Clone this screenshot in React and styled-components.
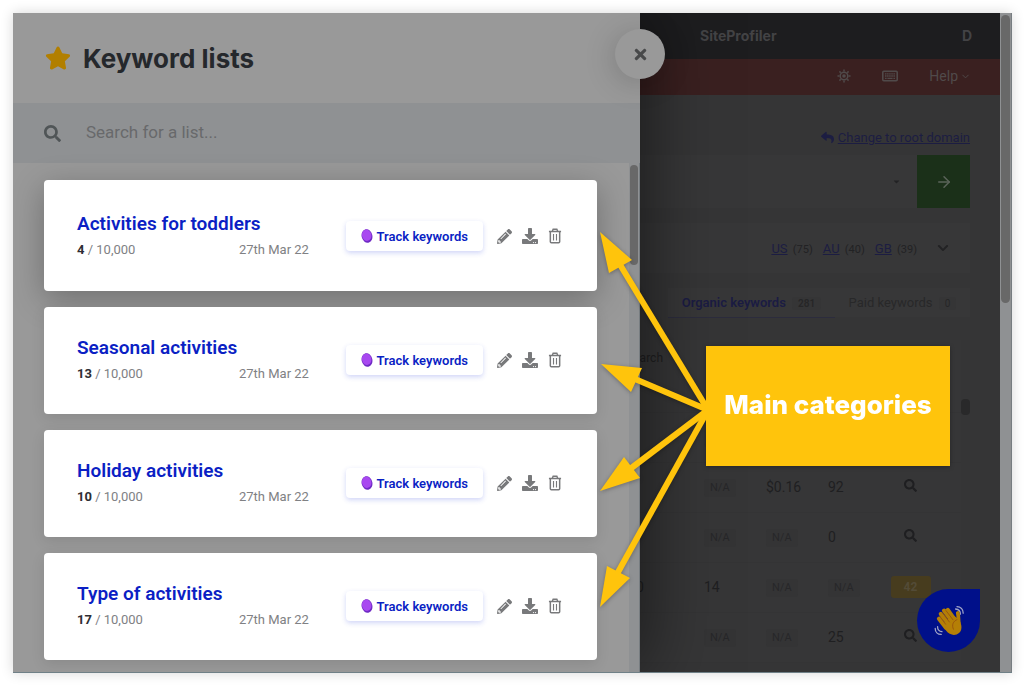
import React, { useState } from 'react';
import styled, { createGlobalStyle } from 'styled-components';
import { FaStar, FaSearch, FaTimes, FaPencilAlt, FaDownload, FaReply, FaCaretDown, FaChevronDown } from 'react-icons/fa';
import { FiArrowRight, FiChevronDown } from 'react-icons/fi';

const body = "Roboto, 'Liberation Sans', sans-serif";
const heading = "Inter, 'Liberation Sans', sans-serif";

const lists = [
  { id: 1, name: 'Activities for toddlers', count: 4, date: '27th Mar 22' },
  { id: 2, name: 'Seasonal activities', count: 13, date: '27th Mar 22' },
  { id: 3, name: 'Holiday activities', count: 10, date: '27th Mar 22' },
  { id: 4, name: 'Type of activities', count: 17, date: '27th Mar 22' },
];

const countries = [
  { code: 'US', count: 75 },
  { code: 'AU', count: 40 },
  { code: 'GB', count: 39 },
];

const keywordRows = [
  { id: 1, volume: '', clicks: null, cpc: null, ppc: '', kd: '' },
  { id: 2, volume: '', clicks: null, cpc: '$0.16', ppc: '92', kd: '' },
  { id: 3, volume: '', clicks: null, cpc: null, ppc: '0', kd: '' },
  { id: 4, volume: '10', clicks: '14', cpc: null, ppc: null, kd: '42' },
  { id: 5, volume: '', clicks: null, cpc: null, ppc: '25', kd: '' },
];

const arrows = [
  { line: [708, 410, 619, 263], head: '600,232 632,260 609,273' },
  { line: [708, 410, 635, 379], head: '601,364 642,368 631,392' },
  { line: [708, 410, 630, 469], head: '600,491 624,457 640,478' },
  { line: [708, 410, 617, 574], head: '600,607 607,566 630,578' },
];

const SunIcon = () => (
  <svg width="14" height="14" viewBox="0 0 14 14" fill="none" stroke="currentColor" aria-hidden="true">
    <circle cx="7" cy="7" r="3.8" strokeWidth="1.5" />
    <circle cx="7" cy="7" r="1.8" fill="currentColor" stroke="none" />
    <path
      d="M7 .5v2M7 11.5v2M.5 7h2M11.5 7h2M2.4 2.4l1.4 1.4M10.2 10.2l1.4 1.4M2.4 11.6l1.4-1.4M10.2 3.8l1.4-1.4"
      strokeWidth="1.5"
    />
  </svg>
);

const KeyboardIcon = () => (
  <svg width="16" height="12" viewBox="0 0 16 12" fill="none" stroke="currentColor" aria-hidden="true">
    <rect x=".8" y="1.2" width="14.4" height="9.6" rx="1" strokeWidth="1.6" />
    <path d="M3 3.8h10M3 6h10" strokeWidth="1.3" strokeDasharray="1.5 .6" />
    <path d="M3 8.3h1.6M5.4 8.3h5.2M11.4 8.3H13" strokeWidth="1.3" />
  </svg>
);

const TrashIcon = () => (
  <svg width="14" height="16" viewBox="0 0 15 17" fill="none" stroke="currentColor" aria-hidden="true">
    <path d="M1 3.6h13M4.6 3.4l.9-2.1h4l.9 2.1" strokeWidth="1.5" />
    <path d="M2.5 4v10.6c0 .7.4 1.1 1.1 1.1h7.8c.7 0 1.1-.4 1.1-1.1V4" strokeWidth="1.6" />
    <path d="M5.9 6.4v6.8M9.1 6.4v6.8" strokeWidth="1.2" />
  </svg>
);

const BlobIcon = () => (
  <svg width="12" height="14" viewBox="0 0 12 14" aria-hidden="true">
    <ellipse cx="6" cy="7" rx="5.4" ry="6.8" fill="#6f2bc4" transform="rotate(-12 6 7)" />
    <ellipse cx="5.6" cy="6.2" rx="4.7" ry="5.7" fill="#a848f0" transform="rotate(-12 6 6)" />
  </svg>
);

const WaveIcon = () => (
  <svg width="32" height="32" viewBox="0 0 32 32" fill="none" strokeLinecap="round" aria-hidden="true">
    <path
      d="M22.6 4c3 .2 4.8 2.2 4.8 5.2M24 1.6c3.6.2 6.2 2.8 6.2 6.6M4.6 21.6c-.2 2.8 1.4 4.8 4.4 5M2.2 23.4c0 3.6 2.4 6 6 6"
      stroke="#a2a6c8"
      strokeWidth="1.3"
    />
    <g stroke="#b57f06" strokeWidth="4.2">
      <path d="M6 13.6l7 9M7.8 9l8 10M11 5.6l8.4 11M14.8 5l7.6 10.6" />
      <path d="M24.8 8c.9 3.6.4 6 1 10" strokeWidth="3.8" />
    </g>
    <path d="M9 19l11.4-8.8 5.4 4.2c3.6 5.4 3.4 10.6.2 13.6-3.6 3.2-9.4 2.4-13-2.4z" fill="#b57f06" />
    <path
      d="M7.2 12l5.4 7.2M9.6 8l6.8 9M13 5.6l7 9.2M24 14.6c-3.8 1.6-5.6 5.2-3.6 9.6"
      stroke="#98520f"
      strokeWidth=".9"
    />
  </svg>
);

const ListCard = ({ item, first }) => (
  <Card $first={first}>
    <div>
      <ListName>{item.name}</ListName>
      <ListMeta>
        <span>
          <strong>{item.count}</strong> / 10,000
        </span>
        <time>{item.date}</time>
      </ListMeta>
    </div>
    <CardActions>
      <TrackButton type="button">
        <BlobIcon />
        Track keywords
      </TrackButton>
      <IconButton type="button" aria-label={`Edit ${item.name}`}>
        <FaPencilAlt size={15} />
      </IconButton>
      <IconButton type="button" aria-label={`Download ${item.name}`}>
        <FaDownload size={16} />
      </IconButton>
      <IconButton type="button" aria-label={`Delete ${item.name}`}>
        <TrashIcon />
      </IconButton>
    </CardActions>
  </Card>
);

const KeywordDrawer = () => {
  const [query, setQuery] = useState('');
  const visible = lists.filter(l => l.name.toLowerCase().includes(query.toLowerCase()));

  return (
    <Drawer>
      <DrawerHeader>
        <FaStar size={26} color="#b27f00" />
        <DrawerTitle>Keyword lists</DrawerTitle>
      </DrawerHeader>
      <CloseButton type="button" aria-label="Close">
        <FaTimes size={17} />
      </CloseButton>
      <SearchBar>
        <FaSearch size={17} />
        <SearchInput
          type="text"
          aria-label="Search for a list"
          placeholder="Search for a list..."
          value={query}
          onChange={e => setQuery(e.target.value)}
        />
      </SearchBar>
      <DrawerBody>
        <CardList>
          {visible.map((item, i) => (
            <ListCard key={item.id} item={item} first={i === 0} />
          ))}
        </CardList>
        <ScrollTrack>
          <ScrollThumb $height={100} />
        </ScrollTrack>
      </DrawerBody>
    </Drawer>
  );
};

const Value = ({ children }) => (children === null ? <Badge>N/A</Badge> : children);

const ExplorerPage = () => (
  <Page>
    <TopBar>
      <span>SiteProfiler</span>
      <span>D</span>
    </TopBar>
    <RedBar>
      <SunIcon />
      <KeyboardIcon />
      <HelpButton type="button">
        Help <FiChevronDown size={11} />
      </HelpButton>
    </RedBar>
    <Content>
      <RootLink>
        <FaReply size={13} />
        <a href="#root">Change to root domain</a>
      </RootLink>
      <UrlBar>
        <FaCaretDown size={9} />
        <GoButton type="button" aria-label="Explore">
          <FiArrowRight size={18} />
        </GoButton>
      </UrlBar>
      <Countries>
        {countries.map(c => (
          <span key={c.code}>
            <a href={`#${c.code}`}>{c.code}</a> <small>({c.count})</small>
          </span>
        ))}
        <FaChevronDown size={12} />
      </Countries>
      <Tabs>
        <Tab type="button" $active>
          Organic keywords <TabCount>281</TabCount>
        </Tab>
        <Tab type="button">
          Paid keywords <TabCount>0</TabCount>
        </Tab>
      </Tabs>
      <TableWrap>
        <Table>
          <thead>
            <tr>
              <th>Search</th>
              <th aria-label="Clicks" />
              <th aria-label="CPC" />
              <th aria-label="PPC" />
              <th aria-label="KD" />
            </tr>
          </thead>
          <tbody>
            {keywordRows.map(row => (
              <tr key={row.id}>
                <td>{row.volume}</td>
                <td>
                  <Value>{row.clicks}</Value>
                </td>
                <td>
                  <Value>{row.cpc}</Value>
                </td>
                <td>
                  <Value>{row.ppc}</Value>
                </td>
                <td>{row.kd ? <Score>{row.kd}</Score> : <FaSearch size={13} />}</td>
              </tr>
            ))}
          </tbody>
        </Table>
        <TableScroll />
      </TableWrap>
    </Content>
    <ChatButton type="button" aria-label="Say hello">
      <WaveIcon />
    </ChatButton>
  </Page>
);

const App = () => (
  <>
    <GlobalStyle />
    <Stage>
      <Frame>
        <KeywordDrawer />
        <ExplorerPage />
        <ScrollTrack>
          <ScrollThumb $height={288} />
        </ScrollTrack>
        <Annotation>
          <svg width="424" height="659" viewBox="588 13 424 659" aria-hidden="true">
            {arrows.map(({ line, head }) => (
              <g key={head} fill="#ffc40c" stroke="#ffc40c">
                <line x1={line[0]} y1={line[1]} x2={line[2]} y2={line[3]} strokeWidth="6" />
                <polygon points={head} stroke="none" />
              </g>
            ))}
          </svg>
          <Callout>Main categories</Callout>
        </Annotation>
      </Frame>
    </Stage>
  </>
);

export default App;

const GlobalStyle = createGlobalStyle`
  * {
    box-sizing: border-box;
  }
  body {
    margin: 0;
    background: #fff;
    font-family: ${body};
  }
  button {
    font: inherit;
    border: 0;
    padding: 0;
    background: none;
    color: inherit;
    cursor: pointer;
  }
`;

const Stage = styled.main`
  min-height: 100vh;
  padding: 13px 12px 13px 13px;
  display: flex;
`;

const Frame = styled.div`
  position: relative;
  flex: 1;
  display: grid;
  grid-template-columns: minmax(0, 1fr) 360px 12px;
  border-bottom: 1px solid #6f8087;
  box-shadow: 0 0 12px rgba(0, 0, 0, 0.16);
`;

const Drawer = styled.section`
  position: relative;
  z-index: 1;
  display: flex;
  flex-direction: column;
  background: #999;
  box-shadow: 4px 0 70px rgba(0, 0, 0, 0.55);
  clip-path: inset(0 -120px 0 0);
`;

const DrawerHeader = styled.header`
  display: flex;
  align-items: center;
  gap: 12px;
  height: 90px;
  padding-left: 32px;
`;

const DrawerTitle = styled.h1`
  margin: 0;
  font-family: ${heading};
  font-size: 26px;
  font-weight: 700;
  color: #25282c;
`;

const CloseButton = styled.button`
  position: absolute;
  top: 16px;
  right: -25px;
  display: flex;
  align-items: center;
  justify-content: center;
  width: 50px;
  height: 50px;
  border-radius: 50%;
  background: #999;
  color: #48494a;
  box-shadow: -2px 4px 30px rgba(0, 0, 0, 0.18);
`;

const SearchBar = styled.label`
  display: flex;
  align-items: center;
  gap: 25px;
  height: 60px;
  padding-left: 31px;
  background: #8f9193;
  color: #505557;
`;

const SearchInput = styled.input`
  flex: 1;
  border: 0;
  outline: 0;
  padding: 0 0 2px;
  background: none;
  font-family: ${body};
  font-size: 17px;
  color: #333;
  &::placeholder {
    color: #68696b;
    opacity: 1;
  }
`;

const DrawerBody = styled.div`
  flex: 1;
  display: grid;
  grid-template-columns: minmax(0, 1fr) 11px;
`;

const CardList = styled.div`
  display: flex;
  flex-direction: column;
  gap: 16px;
  padding: 17px 32px 12px 31px;
`;

const Card = styled.article`
  display: flex;
  justify-content: space-between;
  min-height: ${({ $first }) => ($first ? 111 : 107)}px;
  padding: ${({ $first }) => ($first ? 30 : 27)}px 35px 0 33px;
  border-radius: 4px;
  background: #fff;
  box-shadow: ${({ $first }) => ($first ? '0 8px 32px rgba(0, 0, 0, 0.28)' : '0 4px 14px rgba(0, 0, 0, 0.1)')};
`;

const ListName = styled.h2`
  margin: 0;
  font-size: 19px;
  line-height: 28px;
  font-weight: 600;
  color: #0b1fc4;
`;

const ListMeta = styled.p`
  display: grid;
  grid-template-columns: 162px auto;
  margin: 3px 0 0;
  font-size: 13px;
  line-height: 18px;
  color: #808184;
  strong {
    color: #2d2d33;
  }
`;

const CardActions = styled.div`
  display: flex;
  align-items: center;
  gap: 10px;
  height: 52px;
`;

const TrackButton = styled.button`
  display: flex;
  align-items: center;
  gap: 4px;
  height: 30px;
  margin-right: 4px;
  padding: 0 15px;
  border-radius: 4px;
  font-size: 13px;
  font-weight: 600;
  color: #0b1fc4;
  box-shadow: 0 2px 5px rgba(60, 80, 220, 0.24);
`;

const IconButton = styled.button`
  display: flex;
  color: #78797b;
`;

const ScrollTrack = styled.div`
  background: #8f9193;
  border-right: 1px solid #777d81;
`;

const ScrollThumb = styled.div`
  height: ${({ $height }) => $height}px;
  margin: 2px 1px;
  border-radius: 5px;
  background: #686868;
`;

const Page = styled.section`
  position: relative;
  display: flex;
  flex-direction: column;
  overflow: hidden;
  background: #353536;
  color: #222224;
`;

const TopBar = styled.div`
  display: flex;
  align-items: center;
  justify-content: space-between;
  height: 46px;
  padding: 0 28px 2px 60px;
  background: #1d1d1f;
  font-family: ${heading};
  font-size: 14px;
  font-weight: 700;
  color: #434345;
`;

const RedBar = styled.div`
  display: flex;
  align-items: center;
  justify-content: flex-end;
  gap: 31px;
  height: 36px;
  padding: 0 29px 2px 0;
  background: #3a2020;
  color: #504a4a;
`;

const HelpButton = styled.button`
  display: flex;
  align-items: center;
  gap: 2px;
  font-size: 14px;
`;

const Content = styled.div`
  padding: 32px 30px 0 0;
`;

const RootLink = styled.div`
  display: flex;
  align-items: center;
  justify-content: flex-end;
  gap: 4px;
  height: 20px;
  font-size: 13px;
  color: #1c1d42;
  a {
    color: inherit;
  }
`;

const UrlBar = styled.div`
  display: flex;
  align-items: center;
  justify-content: flex-end;
  gap: 16px;
  height: 53px;
  margin-top: 8px;
  background: #373738;
`;

const GoButton = styled.button`
  display: flex;
  align-items: center;
  justify-content: center;
  width: 53px;
  height: 53px;
  background: #1b3019;
  color: #5b645a;
`;

const Countries = styled.div`
  display: flex;
  align-items: center;
  justify-content: flex-end;
  gap: 10px;
  height: 50px;
  margin-top: 15px;
  padding-right: 21px;
  background: #373738;
  font-size: 13px;
  a {
    color: #1c1d42;
  }
  small {
    margin-left: 2px;
    font-size: 11px;
  }
  svg {
    margin-left: 10px;
  }
`;

const Tabs = styled.div`
  display: flex;
  justify-content: flex-end;
  margin-top: 15px;
  margin-left: 28px;
  background: #373738;
`;

const Tab = styled.button`
  flex: auto;
  height: 30px;
  font-size: 13px;
  font-weight: ${({ $active }) => ($active ? 600 : 400)};
  color: ${({ $active }) => ($active ? '#1b1c43' : '#282829')};
  border-bottom: 1px solid ${({ $active }) => ($active ? '#2c2c3d' : '#353536')};
`;

const TabCount = styled.span`
  margin-left: 3px;
  padding: 1px 6px;
  border-radius: 3px;
  background: #353536;
  font-size: 10px;
  color: #262627;
`;

const TableWrap = styled.div`
  display: flex;
  align-items: flex-start;
  margin-top: 22px;
`;

const Table = styled.table`
  flex: 1;
  width: 100%;
  table-layout: fixed;
  border-collapse: collapse;
  background: #363637;
  font-size: 14px;
  line-height: 16px;
  color: #1f1f21;
  th,
  td {
    height: 50px;
    width: 62px;
    padding: 0;
    text-align: left;
    white-space: nowrap;
    border-bottom: 1px solid #343435;
  }
  th {
    height: 72px;
    padding-bottom: 36px;
    font-size: 12px;
    font-weight: 400;
  }
  /* first column runs in under the drawer */
  th:first-child,
  td:first-child {
    width: 64px;
    direction: rtl;
    text-align: right;
    padding-right: 41px;
  }
  td:first-child {
    padding-right: 60px;
  }
  th:last-child {
    width: auto;
  }
  td:last-child {
    padding-right: 30px;
    text-align: center;
  }
`;

const Badge = styled.span`
  display: inline-block;
  padding: 0 6px;
  border-radius: 3px;
  background: #343435;
  font-size: 11px;
  line-height: 18px;
  color: #272729;
`;

const Score = styled.span`
  display: inline-block;
  width: 40px;
  border-radius: 3px;
  background: #473c1e;
  font-size: 12px;
  font-weight: 700;
  line-height: 22px;
  color: #534b37;
`;

const TableScroll = styled.div`
  flex: none;
  width: 9px;
  height: 16px;
  margin-top: 59px;
  border-radius: 4px;
  background: #29292a;
`;

const ChatButton = styled.button`
  position: absolute;
  right: 20px;
  bottom: 20px;
  display: flex;
  align-items: center;
  justify-content: center;
  width: 63px;
  height: 63px;
  border-radius: 50% 0 50% 50%;
  background: #00108a;
`;

const Annotation = styled.div`
  position: absolute;
  z-index: 2;
  top: 0;
  right: 0;
  width: 424px;
  filter: drop-shadow(0 1px 2px rgba(0, 0, 0, 0.3));
  pointer-events: none;
  svg {
    display: block;
  }
`;

const Callout = styled.div`
  position: absolute;
  top: 333px;
  left: 118px;
  display: flex;
  align-items: center;
  justify-content: center;
  width: 244px;
  height: 120px;
  padding-bottom: 4px;
  background: #ffc40c;
  font-family: ${heading};
  font-size: 26px;
  font-weight: 800;
  color: #fff;
  white-space: nowrap;
`;
